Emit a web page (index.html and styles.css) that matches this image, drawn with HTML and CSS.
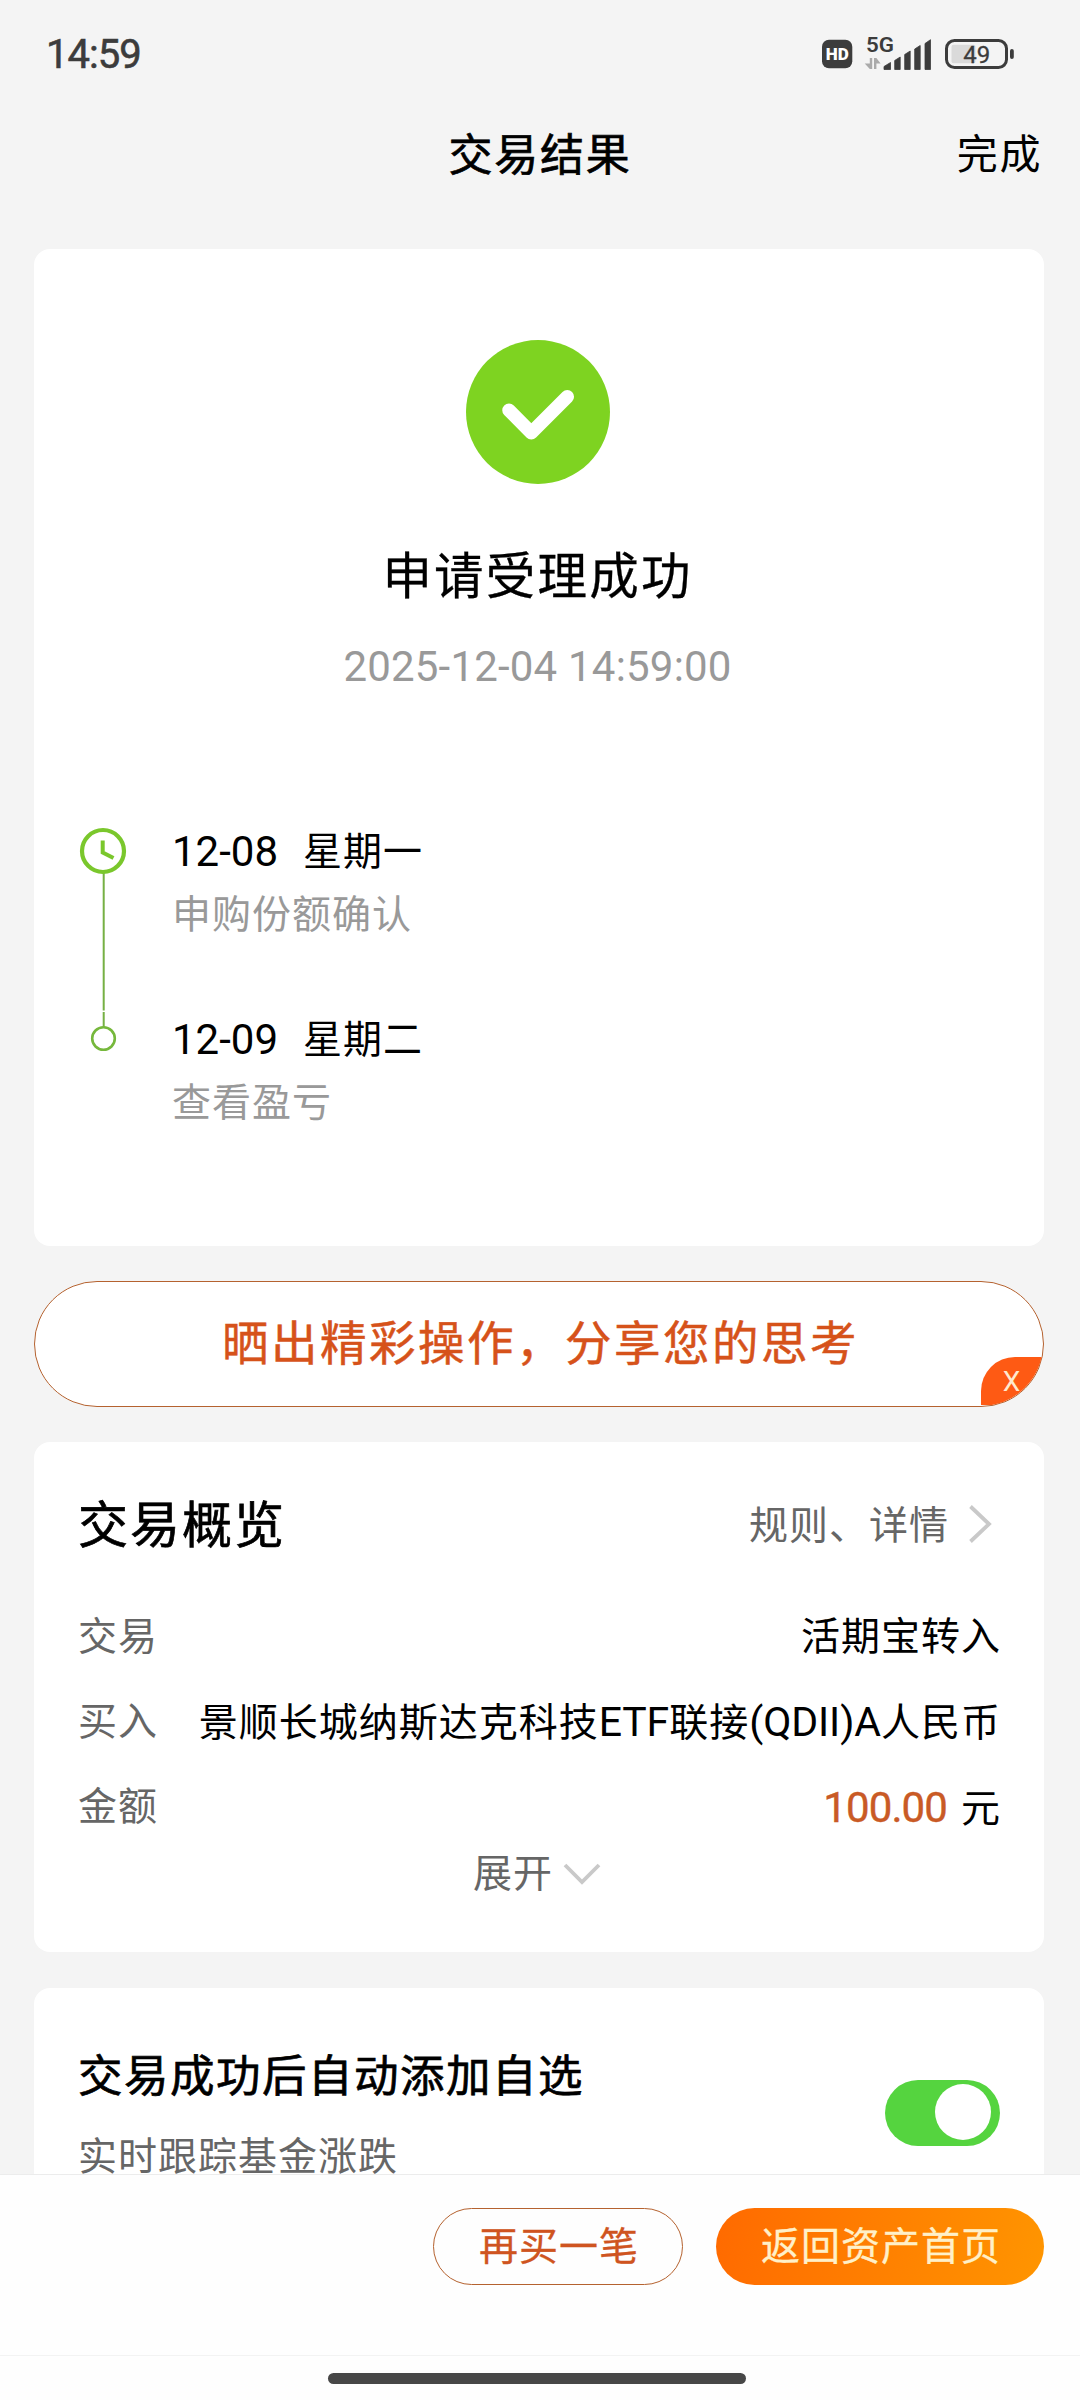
FILE: index.html
```html
<!DOCTYPE html>
<html lang="zh-CN">
<head>
<meta charset="utf-8">
<title>交易结果</title>
<link rel="stylesheet" href="styles.css">
</head>
<body>
<div class="screen">
  <header class="status">
    <span class="clock">14:59</span>
    <svg class="status-icons" width="200" height="40" viewBox="818 34 200 40">
      <rect x="822" y="39.7" width="30.3" height="28.6" rx="7" fill="#3c3c3c"/>
      <text x="837.2" y="60" class="hd" text-anchor="middle" textLength="23" lengthAdjust="spacingAndGlyphs">HD</text>
      <text x="866" y="52" class="net" textLength="28" lengthAdjust="spacingAndGlyphs">5G</text>
      <path d="M869.800 58v11h2.400V58zM864.700 63.500l5.100 5.500v-5.500zM874 58v11h2.400V58zM876.400 58l4.200 5.500h-4.200z" fill="#aaa"/>
      <path d="M884 66.500l6.500-4V69.500h-6.500zM894.700 60.500l5.500-3.500V69.500h-5.500zM904.700 54.500l5.500-3.500V69.500h-5.500zM914.700 49l5.500-3.500V69.500h-5.500zM925 43.500l5.500-3.800V69.500h-5.500z" fill="#3c3c3c" stroke="#3c3c3c" stroke-width=".8" stroke-linejoin="round"/>
      <rect x="951.500" y="44.700" width="24" height="18.500" rx="2" fill="#dadada"/>
      <rect x="946.500" y="40.500" width="60" height="27" rx="8" fill="none" stroke="#3c3c3c" stroke-width="3"/>
      <rect x="1010" y="49" width="3.800" height="10" rx="1.900" fill="#3c3c3c"/>
      <text x="976.700" y="62.800" class="level" text-anchor="middle">49</text>
    </svg>
  </header>

  <nav class="nav">
    <h1 class="nav-title">交易结果</h1>
    <a class="nav-done">完成</a>
  </nav>

  <main class="content">
    <section class="card result">
      <svg class="result-icon" width="144" height="144" viewBox="0 0 144 144">
        <circle cx="72" cy="72" r="72" fill="#7ed321"/>
        <path d="M43 70.300L65.300 92.700L101.300 56.700" fill="none" stroke="#fff" stroke-width="13.500" stroke-linecap="round" stroke-linejoin="round"/>
      </svg>
      <h2 class="result-title">申请受理成功</h2>
      <time class="result-time">2025-12-04 14:59:00</time>
      <div class="timeline">
        <svg class="track" width="50" height="226" viewBox="79 827 50 226" fill="none">
          <path d="M103.700 873V1010.500M103.700 1012V1027" stroke="#76b043" stroke-width="2"/>
          <circle cx="103" cy="851" r="21" stroke="#7ac72c" stroke-width="4.200"/>
          <path d="M102.700 840.500V852.500L113.500 858" stroke="#7ac72c" stroke-width="4"/>
          <circle cx="103.500" cy="1038.500" r="11.300" stroke="#76b83c" stroke-width="2.600"/>
        </svg>
        <ol class="steps">
          <li><p class="step-date"><span class="num">12-08</span><span>星期一</span></p><p class="step-text">申购份额确认</p></li>
          <li><p class="step-date"><span class="num">12-09</span><span>星期二</span></p><p class="step-text">查看盈亏</p></li>
        </ol>
      </div>
    </section>

    <section class="share">
      <span class="share-text">晒出精彩操作，分享您的思考</span>
      <span class="share-close">X</span>
    </section>

    <section class="card overview">
      <div class="overview-head">
        <h2 class="overview-title">交易概览</h2>
        <a class="rules"><span>规则、详情</span>
          <svg width="24" height="40" viewBox="0 0 24 40"><path d="M2.500 2.500L21 20L2.500 37.500" fill="none" stroke="#c9c9c9" stroke-width="3.800"/></svg>
        </a>
      </div>
      <dl class="rows">
        <div class="row"><dt>交易</dt><dd>活期宝转入</dd></div>
        <div class="row"><dt>买入</dt><dd>景顺长城纳斯达克科技<span class="latin">ETF</span>联接<span class="latin">(QDII)A</span>人民币</dd></div>
        <div class="row"><dt>金额</dt><dd><span class="amount">100.00</span>元</dd></div>
      </dl>
      <a class="expand"><span>展开</span>
        <svg width="38" height="24" viewBox="0 0 38 24"><path d="M2 3L19 20L36 3" fill="none" stroke="#c9c9c9" stroke-width="3.800"/></svg>
      </a>
    </section>

    <section class="card favorite">
      <div>
        <h2 class="favorite-title">交易成功后自动添加自选</h2>
        <p class="favorite-text">实时跟踪基金涨跌</p>
      </div>
      <span class="toggle"><i class="knob"></i></span>
    </section>
  </main>

  <footer class="footer">
    <div class="actions">
      <a class="btn outline">再买一笔</a>
      <a class="btn primary">返回资产首页</a>
    </div>
    <div class="gesture"><i class="home-bar"></i></div>
  </footer>
</div>
</body>
</html>
```
FILE: styles.css
```css
* { box-sizing: border-box; margin: 0; padding: 0; }
body {
  width: 1080px;
  font-family: Roboto, "Noto Sans CJK SC", sans-serif;
  font-size: 39px;
  letter-spacing: 1px;
  color: #000;
  background: #f4f4f4;
}
h1, h2 { font-weight: 400; -webkit-text-stroke: .7px currentColor; }
ol { list-style: none; }
svg { display: block; flex: none; }
svg text { letter-spacing: 0; }

.screen {
  display: flex;
  flex-direction: column;
  width: 1080px;
  height: 2400px;
  overflow: hidden;
}

/* status bar */
.status {
  display: flex;
  justify-content: space-between;
  align-items: center;
  flex: none;
  height: 108px;
  padding: 0 62px 0 46px;
}
.clock {
  font-size: 40px;
  letter-spacing: -1px;
  color: #3c3c3c;
  -webkit-text-stroke: .6px currentColor;
}
.hd { font-size: 16px; font-weight: 900; fill: #fff; }
.net { font-size: 21px; font-weight: 600; fill: #3c3c3c; }
.level { font-size: 24px; font-weight: 400; fill: #3c3c3c; stroke: #3c3c3c; stroke-width: .3px; }

/* navigation bar */
.nav {
  display: grid;
  grid-template-columns: 1fr auto 1fr;
  align-items: center;
  flex: none;
  height: 95px;
  padding: 0 38px;
  line-height: 60px;
}
.nav-title { grid-column: 2; font-size: 44px; letter-spacing: 1.8px; }
.nav-done { justify-self: end; margin-top: -2px; font-size: 41px; letter-spacing: 1.6px; }

.content {
  flex: 1;
  min-height: 0;
  overflow: hidden;
  padding: 46px 36px 0 34px;
}
.card { border-radius: 16px; background: #fff; }

/* result card */
.result {
  display: flex;
  flex-direction: column;
  align-items: center;
  height: 997px;
  padding: 91px 3px 0 0;
}
.result-title {
  margin-top: 63px;
  font-size: 49.500px;
  line-height: 61px;
  letter-spacing: 2.200px;
  -webkit-text-stroke-width: .3px;
}
.result-time {
  margin-top: 34px;
  font-size: 42px;
  line-height: 50px;
  letter-spacing: .2px;
  color: #999;
}
.timeline {
  display: flex;
  align-self: stretch;
  gap: 43px;
  margin-top: 135px;
  padding-left: 45px;
}
.steps { display: grid; gap: 75px; line-height: 50px; }
.step-date { display: flex; gap: 25px; }
.num { font-size: 42px; letter-spacing: 0; }
.step-text { margin-top: 13px; color: #999; }

/* share banner */
.share {
  position: relative;
  display: flex;
  align-items: center;
  justify-content: center;
  height: 126px;
  margin-top: 35px;
  overflow: hidden;
  border: 1.500px solid #b5622f;
  border-radius: 63px;
  background: #fff;
}
.share-text {
  padding-left: 3px;
  font-size: 46.500px;
  line-height: 60px;
  letter-spacing: 2.500px;
  color: #d6521a;
  -webkit-text-stroke: .5px currentColor;
}
.share-close {
  position: absolute;
  right: 0;
  bottom: 1px;
  width: 62px;
  height: 48px;
  padding-right: 1px;
  border-top-left-radius: 34px;
  background: #fe5a14;
  color: #ffe9cf;
  font-size: 28px;
  line-height: 50px;
  letter-spacing: 0;
  text-align: center;
}

/* overview card */
.overview {
  height: 510px;
  margin-top: 35px;
  padding: 49px 44px 0;
}
.overview-head {
  display: flex;
  justify-content: space-between;
  align-items: center;
  height: 69px;
  line-height: 60px;
}
.overview-title { font-size: 50px; letter-spacing: 2px; }
.rules { display: flex; align-items: center; gap: 19px; padding-right: 8px; color: #666; }
.rules svg { margin-top: -3px; }
.rows { margin-top: 35px; }
.row { display: flex; justify-content: space-between; height: 85px; line-height: 85px; }
.row dt { color: #666; }
.row dd { margin-right: -1px; }
.latin { font-size: 41px; letter-spacing: -.1px; }
.amount { margin-right: 14px; font-size: 42px; letter-spacing: -.9px; color: #c95a25; -webkit-text-stroke: .4px currentColor; }
.expand {
  display: flex;
  align-items: center;
  justify-content: center;
  gap: 10px;
  height: 48px;
  padding-right: 4px;
  line-height: 48px;
  color: #666;
}

/* favourite card */
.favorite {
  display: flex;
  justify-content: space-between;
  align-items: flex-start;
  height: 260px;
  margin-top: 36px;
  padding: 59px 44px 0;
}
.favorite-title { font-size: 44.500px; line-height: 60px; letter-spacing: 1.500px; }
.favorite-text { margin-top: 25px; line-height: 50px; color: #666; }
.toggle {
  display: flex;
  justify-content: flex-end;
  width: 115px;
  height: 66px;
  margin-top: 33px;
  padding: 4px 9px 0 0;
  border-radius: 33px;
  background: #55d43f;
}
.knob { width: 56px; height: 56px; border-radius: 50%; background: #fff; }

/* bottom actions */
.footer { flex: none; height: 226px; border-top: 1px solid #ececec; background: #fefefe; }
.actions {
  display: flex;
  justify-content: flex-end;
  gap: 33px;
  height: 180px;
  padding: 33px 36px 0 0;
}
.btn {
  height: 77px;
  padding: 1px 0 0 2px;
  border-radius: 39px;
  line-height: 76px;
  text-align: center;
}
.outline {
  width: 250px;
  border: 1.500px solid #b5622f;
  color: #cf5420;
  line-height: 74px;
  -webkit-text-stroke: .3px currentColor;
}
.primary {
  width: 328px;
  background: linear-gradient(100deg, #ff6a00, #ff9500);
  color: #fff0c8;
  -webkit-text-stroke: .3px currentColor;
}
.gesture {
  display: flex;
  justify-content: center;
  height: 45px;
  padding: 17px 7px 0 0;
  border-top: 1px solid #f3f3f3;
}
.home-bar { width: 418px; height: 11px; border-radius: 6px; background: #474747; }
```
